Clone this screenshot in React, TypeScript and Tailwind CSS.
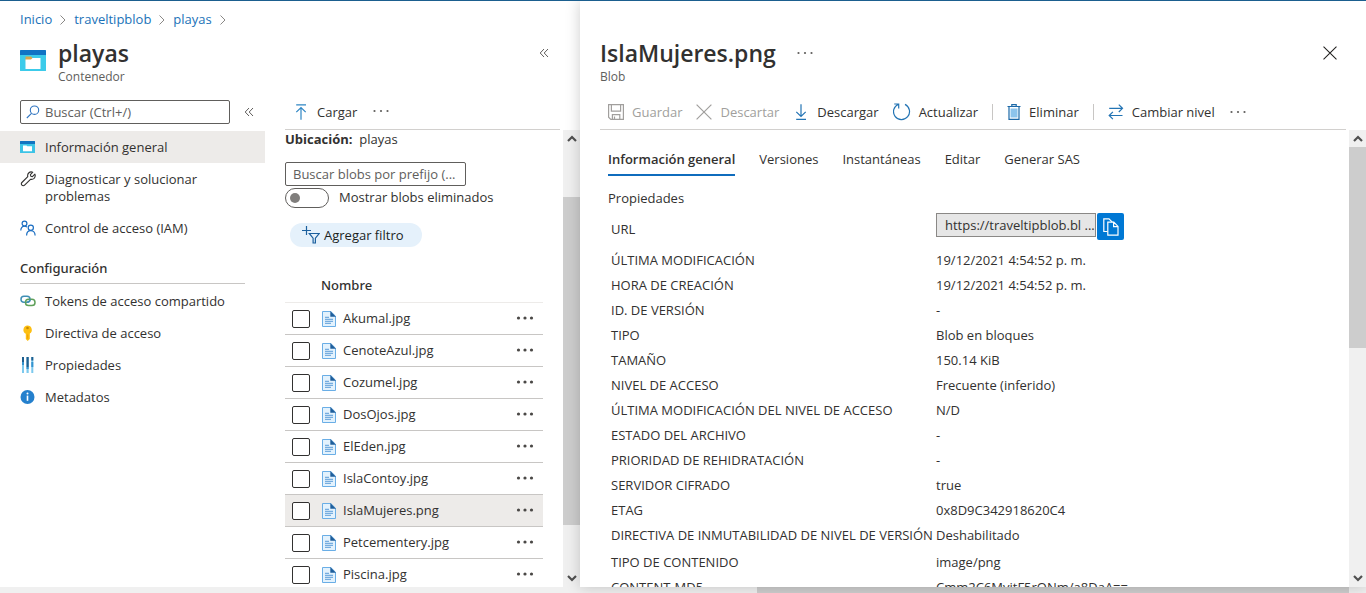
import React from "react";

const files = [
  "Akumal.jpg",
  "CenoteAzul.jpg",
  "Cozumel.jpg",
  "DosOjos.jpg",
  "ElEden.jpg",
  "IslaContoy.jpg",
  "IslaMujeres.png",
  "Petcementery.jpg",
  "Piscina.jpg",
];

const properties: [string, string][] = [
  ["ÚLTIMA MODIFICACIÓN", "19/12/2021 4:54:52 p. m."],
  ["HORA DE CREACIÓN", "19/12/2021 4:54:52 p. m."],
  ["ID. DE VERSIÓN", "-"],
  ["TIPO", "Blob en bloques"],
  ["TAMAÑO", "150.14 KiB"],
  ["NIVEL DE ACCESO", "Frecuente (inferido)"],
  ["ÚLTIMA MODIFICACIÓN DEL NIVEL DE ACCESO", "N/D"],
  ["ESTADO DEL ARCHIVO", "-"],
  ["PRIORIDAD DE REHIDRATACIÓN", "-"],
  ["SERVIDOR CIFRADO", "true"],
  ["ETAG", "0x8D9C342918620C4"],
  ["DIRECTIVA DE INMUTABILIDAD DE NIVEL DE VERSIÓN", "Deshabilitado"],
  ["TIPO DE CONTENIDO", "image/png"],
  ["CONTENT-MD5", "Cmm2C6MvitF5rONm/a8DaA=="],
];

type IconProps = { className?: string };

function ContainerIcon({ className }: IconProps) {
  return (
    <svg viewBox="0 0 26 21" className={className} aria-hidden="true">
      <rect width="26" height="21" rx="1" fill="#32bfe0" />
      <rect y="5" width="26" height="16" rx="1" fill="#3ccbea" />
      <path d="M0 1a1 1 0 0 1 1-1h24a1 1 0 0 1 1 1v4H0z" fill="#0f73c4" />
      <path d="M5.500 6.500h5.500l1.500 1.500v3h-7z" fill="#d9a54a" />
      <path d="M5.500 9.500h5.500l1.500-1.500h8v11h-15z" fill="#fff" />
    </svg>
  );
}

function ContainerSmallIcon() {
  return (
    <svg viewBox="0 0 15 12" className="h-3 w-[15px]" aria-hidden="true">
      <rect width="15" height="12" rx=".6" fill="#3cc3e6" />
      <path d="M0 .6A.6.6 0 0 1 .6 0h13.800a.6.6 0 0 1 .6.6V3H0z" fill="#1273c0" />
      <path d="M3 4.500h3.500l.8.8H12v5H3z" fill="#fff" />
    </svg>
  );
}

function WrenchIcon() {
  return (
    <svg viewBox="0 0 16 16" className="size-4" fill="none" stroke="#323130" strokeWidth="1.100" strokeLinejoin="round" aria-hidden="true">
      <path d="M12.800 1.200 10.400 3.600l.4 1.600 1.600.4 2.500-2.400c.6 1.600.3 3.100-.8 4.200-1 .9-2.300 1.200-3.600.9l-5.900 5.900a1.900 1.900 0 0 1-2.700 0 1.900 1.900 0 0 1 0-2.700l5.900-5.900c-.4-1.400 0-2.700.9-3.600 1.100-1.100 2.600-1.300 4.100-.8z" />
    </svg>
  );
}

function PeopleIcon() {
  return (
    <svg viewBox="0 0 16 16" className="size-4" fill="none" stroke="#1b6ec2" strokeWidth="1.200" aria-hidden="true">
      <circle cx="4.500" cy="3.600" r="2.400" />
      <path d="M.8 10.500c0-2.600 1.500-4.300 3.700-4.300 1 0 1.900.4 2.500 1" />
      <circle cx="10.800" cy="7.800" r="2.600" />
      <path d="M6.600 15.500c0-2.900 1.700-4.900 4.200-4.900s4.300 2 4.300 4.900" />
    </svg>
  );
}

function LinkIcon() {
  return (
    <svg viewBox="0 0 16 12" className="h-3 w-4" fill="none" strokeWidth="1.500" aria-hidden="true">
      <rect x="1" y="1.300" width="9" height="6" rx="3" stroke="#3f8fb5" />
      <rect x="5.500" y="4.300" width="9.500" height="6.200" rx="3.100" stroke="#5fa05a" />
      <path d="M7 7.300c2 0 3-1 3-3" stroke="#3f8fb5" />
    </svg>
  );
}

function KeyIcon() {
  return (
    <svg viewBox="0 0 16 16" className="size-4" aria-hidden="true">
      <path d="M7.500.5a4.400 4.400 0 0 1 2.300 8.100v5.500L7.700 16 5.800 14V8.800A4.400 4.400 0 0 1 7.500.5z" fill="#fdbf12" />
      <circle cx="7.500" cy="3" r="1.300" fill="#c98a00" />
      <path d="M7.300 9.500h.9v4.300h-.9z" fill="#f09a00" />
    </svg>
  );
}

function BarsIcon() {
  return (
    <svg viewBox="0 0 16 16" className="size-4" aria-hidden="true">
      <path d="M2 0h2v16H2zM6.500 0h2.200v16H6.500zM11.300 0h2v16h-2z" fill="#7cc9ee" />
      <path d="M2 0h2v5H2zM6.500 0h2.200v10H6.500zM11.300 0h2v3.500h-2z" fill="#1f5f8f" />
      <path d="M2 5h2v3H2zM6.500 10h2.200v2H6.500zM11.300 5h2v5h-2z" fill="#3593cf" />
    </svg>
  );
}

function InfoIcon() {
  return (
    <svg viewBox="0 0 16 16" className="size-4" aria-hidden="true">
      <circle cx="7.500" cy="8" r="7" fill="#2580cd" />
      <circle cx="7.500" cy="4.600" r="1" fill="#fff" />
      <path d="M6.700 6.600h1.600v5.200H6.700z" fill="#fff" />
    </svg>
  );
}

function SearchIcon() {
  return (
    <svg viewBox="0 0 14 14" className="size-[14px] shrink-0" fill="none" stroke="#2f74c0" strokeWidth="1.100" aria-hidden="true">
      <circle cx="8.500" cy="5.200" r="4.200" />
      <path d="M5.500 8.300.8 13" />
    </svg>
  );
}

function CollapseIcon() {
  return (
    <svg viewBox="0 0 10 10" className="size-[10px]" fill="none" stroke="#605e5c" strokeWidth="1" aria-hidden="true">
      <path d="M5 1 1.200 5 5 9M9 1 5.200 5 9 9" />
    </svg>
  );
}

function CrumbIcon() {
  return (
    <svg viewBox="0 0 8 12" className="h-3 w-2" fill="none" stroke="#8a8886" aria-hidden="true">
      <path d="m1.500 1.500 4.500 4.500-4.500 4.500" />
    </svg>
  );
}

function DotsIcon({ bold }: { bold?: boolean }) {
  return (
    <svg viewBox="0 0 18 4" className="h-1 w-[18px]" fill={bold ? "#4a4846" : "#605e5c"} aria-hidden="true">
      <circle cx="2.500" cy="2" r={bold ? 1.6 : 1.1} />
      <circle cx="9" cy="2" r={bold ? 1.6 : 1.1} />
      <circle cx="15.500" cy="2" r={bold ? 1.6 : 1.1} />
    </svg>
  );
}

function UploadIcon() {
  return (
    <svg viewBox="0 0 16 16" className="size-4" fill="none" stroke="#2f86c4" strokeWidth="1.200" aria-hidden="true">
      <path d="M3.200.8h9.800M8 15.800V3.500M3.300 8.200 8 3.500l4.700 4.700" />
    </svg>
  );
}

function DownloadIcon() {
  return (
    <svg viewBox="0 0 16 16" className="size-4" fill="none" stroke="#2374b4" strokeWidth="1.200" aria-hidden="true">
      <path d="M3.200 15.300h9.800M8 .2v12.300M3.300 7.800 8 12.500l4.700-4.700" />
    </svg>
  );
}

function SaveIcon() {
  return (
    <svg viewBox="0 0 16 16" className="size-4" fill="none" stroke="#a19f9d" strokeWidth="1.200" aria-hidden="true">
      <path d="M.6.6h14.800v14.800H2.800L.6 13.200zM3.400.6v6.600h9.200V.6M4.400 15.400v-4.800h7.400v4.800M6.500 12.500v2.900" />
    </svg>
  );
}

function CrossIcon({ className, stroke }: { className: string; stroke: string }) {
  return (
    <svg viewBox="0 0 16 16" className={className} fill="none" stroke={stroke} strokeWidth="1.200" aria-hidden="true">
      <path d="m.6.6 14.800 14.800M15.400.6.6 15.400" />
    </svg>
  );
}

function RefreshIcon() {
  return (
    <svg viewBox="0 0 18 18" className="size-[18px]" fill="none" stroke="#2374b4" strokeWidth="1.200" aria-hidden="true">
      <path d="M5.500 1.200A8 8 0 1 0 12 1.400M1.200 1h4.500v4.500" />
    </svg>
  );
}

function TrashIcon() {
  return (
    <svg viewBox="0 0 14 16" className="h-4 w-[14px]" fill="none" stroke="#1c69a8" strokeWidth="1.200" aria-hidden="true">
      <path d="M3.500 4.500h7v9h-7z" fill="#8cc4ec" stroke="none" />
      <path d="M.5 2.500h13M4.800 2.300V.7h4.400v1.600M2 2.800v12.500h10V2.800" />
    </svg>
  );
}

function SwapIcon() {
  return (
    <svg viewBox="0 0 16 16" className="size-4" fill="none" stroke="#2374b4" strokeWidth="1.200" aria-hidden="true">
      <path d="M1.200 4.300h13.300M10.800.6l3.700 3.700L10.800 8M14.500 11.500H1.200M4.900 7.800l-3.700 3.700 3.700 3.700" />
    </svg>
  );
}

function FilterIcon() {
  return (
    <svg viewBox="0 0 18 18" className="size-[18px]" fill="none" stroke="#1c609e" strokeWidth="1.200" aria-hidden="true">
      <path d="M0 4.500h9M4.500 0v9M7.300 7.500h10l-3.900 4.700V17h-2.300v-4.800z" />
    </svg>
  );
}

function FileIcon() {
  return (
    <svg viewBox="0 0 14 16" className="h-4 w-[14px]" aria-hidden="true">
      <path d="M.5.500h8.300L13.500 5.200v10.300H.5z" fill="#e3f2fd" stroke="#6aaee6" />
      <path d="M8.300 0 14 5.700H8.300z" fill="#1f5f9c" />
      <path d="M3 6.300h4M3 8.300h8M3 10.300h8M3 12.300h6" stroke="#5a9bd8" />
    </svg>
  );
}

function CopyIcon() {
  return (
    <svg viewBox="0 0 16 18" className="h-[18px] w-4" fill="none" stroke="#fff" strokeWidth="1.200" aria-hidden="true">
      <path d="M4.500 13.500H.8V.8H6l3.300 3.300" />
      <path d="M4.800 4.200h6l4.200 4.200v8.700H4.800zM10.600 4.400v4.200H15" />
    </svg>
  );
}

function ScrollArrow({ down }: { down?: boolean }) {
  return (
    <button type="button" aria-label={down ? "Bajar" : "Subir"} className="flex h-[17px] w-full shrink-0 items-center justify-center">
      <svg viewBox="0 0 10 7" className="h-[7px] w-[10px]" fill="none" stroke="#505050" strokeWidth="2.200" aria-hidden="true">
        <path d={down ? "m1 1 4 4 4-4" : "m1 6 4-4 4 4"} />
      </svg>
    </button>
  );
}

function MenuItem({ icon, children, selected }: { icon: React.ReactNode; children: React.ReactNode; selected?: boolean }) {
  return (
    <li>
      <a href="#" className={selected ? "flex gap-2 bg-[#edebe9] pb-[7px] pl-5 pr-10 pt-2" : "flex gap-2 pb-[7px] pl-5 pr-10 pt-2"}>
        <span className="flex h-4 w-[17px] shrink-0 items-center">{icon}</span>
        <span className="leading-[17px]">{children}</span>
      </a>
    </li>
  );
}

function Sidebar() {
  return (
    <nav className="w-[265px] shrink-0">
      <div className="flex items-center pl-5">
        <label className="flex h-6 w-[210px] shrink-0 items-center gap-1 rounded-xs border border-[#605e5c] pl-[5px]">
          <SearchIcon />
          <input aria-label="Buscar" placeholder="Buscar (Ctrl+/)" className="w-full min-w-0 pl-px pt-px outline-none placeholder:text-[#605e5c]" />
        </label>
        <button type="button" aria-label="Contraer menú" className="ml-[14px]">
          <CollapseIcon />
        </button>
      </div>
      <ul className="mt-[7px]">
        <MenuItem icon={<ContainerSmallIcon />} selected>Información general</MenuItem>
        <MenuItem icon={<WrenchIcon />}>Diagnosticar y solucionar problemas</MenuItem>
        <MenuItem icon={<PeopleIcon />}>Control de acceso (IAM)</MenuItem>
      </ul>
      <h2 className="mx-5 mt-[13px] border-b border-[#c8c6c4] pb-1 font-['Noto_Sans',sans-serif] font-medium leading-[22px]">Configuración</h2>
      <ul className="mt-px">
        <MenuItem icon={<LinkIcon />}>Tokens de acceso compartido</MenuItem>
        <MenuItem icon={<KeyIcon />}>Directiva de acceso</MenuItem>
        <MenuItem icon={<BarsIcon />}>Propiedades</MenuItem>
        <MenuItem icon={<InfoIcon />}>Metadatos</MenuItem>
      </ul>
    </nav>
  );
}

function BlobList() {
  return (
    <section className="flex min-h-0 min-w-0 flex-1 flex-col pl-5">
      <div className="mr-5 flex h-[30px] shrink-0 items-start border-b border-[#d2d0ce]">
        <button type="button" className="flex h-6 items-center gap-2 pl-2">
          <UploadIcon />
          <span className="pt-[2px]">Cargar</span>
        </button>
        <button type="button" aria-label="Más" className="ml-[15px] flex h-[22px] items-center">
          <DotsIcon />
        </button>
      </div>
      <div className="flex min-h-0 flex-1">
        <div className="min-w-0 flex-1 overflow-hidden">
          <p className="leading-[18px]"><b className="font-bold">Ubicación:</b>&nbsp; playas</p>
          <input
            aria-label="Buscar blobs por prefijo"
            placeholder="Buscar blobs por prefijo (..."
            className="mt-[14px] block h-6 w-[181px] rounded-xs border border-[#605e5c] px-[7px] outline-none placeholder:text-[#605e5c]"
          />
          <label className="mt-[2px] flex h-5 items-center gap-[10px]">
            <input
              type="checkbox"
              role="switch"
              className="h-5 w-11 shrink-0 appearance-none rounded-full border border-[#605e5c] p-1 before:block before:size-[10px] before:rounded-full before:bg-[#807e7c]"
            />
            Mostrar blobs eliminados
          </label>
          <button type="button" className="ml-[5px] mt-[15px] flex h-6 items-center gap-1 rounded-full bg-[#e5f1fb] pl-3 pr-[18px] text-[#201f1e]">
            <FilterIcon />
            <span className="pt-[2px]">Agregar filtro</span>
          </button>
          <table className="mt-[21px] w-[258px] border-collapse">
            <thead>
              <tr className="h-[34px] border-b border-[#edebe9]">
                <th className="w-9"><input type="checkbox" aria-label="Seleccionar todo" className="sr-only" /></th>
                <th className="p-0 pt-[2px] text-left font-['Noto_Sans',sans-serif] font-medium">Nombre</th>
                <th className="w-[27px]" />
              </tr>
            </thead>
            <tbody>
              {files.map((name) => (
                <tr key={name} className={name === "IslaMujeres.png" ? "h-8 border-b border-[#c8c6c4] bg-[#edebe9]" : "h-8 border-b border-[#c8c6c4]"}>
                  <td className="p-0 pt-[2px]">
                    <input type="checkbox" aria-label={name} className="ml-[7px] block size-[18px] appearance-none rounded-xs border border-[#323130] bg-white" />
                  </td>
                  <td className="p-0 pt-[2px]">
                    <a href="#" className="flex items-center gap-[7px] pl-px">
                      <FileIcon />
                      {name}
                    </a>
                  </td>
                  <td className="p-0 pt-[2px]">
                    <button type="button" aria-label={"Opciones de " + name} className="flex h-4 items-center pb-[2px]">
                      <DotsIcon bold />
                    </button>
                  </td>
                </tr>
              ))}
            </tbody>
          </table>
        </div>
        <div className="flex w-[17px] shrink-0 flex-col bg-[#f0f0f0]">
          <ScrollArrow />
          <div className="flex min-h-0 flex-1 flex-col">
            <div className="flex-50" />
            <div className="flex-328 bg-[#cdcdcd]" />
            <div className="flex-45" />
          </div>
          <ScrollArrow down />
        </div>
      </div>
    </section>
  );
}

function Tool({ icon, children, disabled }: { icon: React.ReactNode; children: string; disabled?: boolean }) {
  return (
    <button type="button" disabled={disabled} className={disabled ? "flex items-center gap-2 text-[#a19f9d]" : "flex items-center gap-2"}>
      {icon}
      <span className="pt-[2px]">{children}</span>
    </button>
  );
}

function DetailPanel() {
  return (
    <main className="relative flex min-h-0 min-w-0 flex-1 flex-col bg-white shadow-[0_0_14px_rgba(0,0,0,0.2)]">
      <header className="flex h-[99px] shrink-0 items-start justify-between pl-5 pr-[29px]">
        <div>
          <div className="mt-9 flex h-8 items-center gap-5">
            <h1 className="text-[23px] font-semibold">IslaMujeres.png</h1>
            <button type="button" aria-label="Más acciones"><DotsIcon /></button>
          </div>
          <p className="text-xs leading-4 text-[#605e5c]">Blob</p>
        </div>
        <button type="button" aria-label="Cerrar" className="mt-[45px]">
          <CrossIcon className="size-[14px]" stroke="#201f1e" />
        </button>
      </header>
      <div className="ml-5 mr-5 flex h-[30px] shrink-0 items-start whitespace-nowrap border-b border-[#d2d0ce] pl-2">
        <div className="flex h-6 items-center gap-[14px]">
          <Tool disabled icon={<SaveIcon />}>Guardar</Tool>
          <Tool disabled icon={<CrossIcon className="size-4" stroke="#a19f9d" />}>Descartar</Tool>
          <Tool icon={<DownloadIcon />}>Descargar</Tool>
          <Tool icon={<RefreshIcon />}>Actualizar</Tool>
          <span className="h-4 w-px bg-[#c8c6c4]" />
          <Tool icon={<TrashIcon />}>Eliminar</Tool>
          <span className="h-4 w-px bg-[#c8c6c4]" />
          <Tool icon={<SwapIcon />}>Cambiar nivel</Tool>
          <button type="button" aria-label="Más"><DotsIcon /></button>
        </div>
      </div>
      <div className="flex min-h-0 flex-1">
        <div className="min-w-0 flex-1 overflow-hidden pl-7">
          <div role="tablist" className="mt-[19px] flex h-[27px] gap-6">
            <button type="button" role="tab" aria-selected="true" className="border-b-2 border-[#0f6cbd] pb-[3px] font-semibold">Información general</button>
            <button type="button" role="tab" className="pb-[5px]">Versiones</button>
            <button type="button" role="tab" className="pb-[5px]">Instantáneas</button>
            <button type="button" role="tab" className="pb-[5px]">Editar</button>
            <button type="button" role="tab" className="pb-[5px]">Generar SAS</button>
          </div>
          <h2 className="mt-[13px] leading-[18px]">Propiedades</h2>
          <table className="ml-[3px] mt-[6px] border-collapse">
            <tbody>
              <tr className="h-[34px] align-top">
                <th className="w-[325px] p-0 text-left font-normal"><label htmlFor="url" className="block pt-[7px] leading-[18px]">URL</label></th>
                <td className="p-0">
                  <div className="flex items-start gap-px">
                    <input id="url" readOnly value="https://traveltipblob.bl ..." className="h-6 w-40 border border-[#8a8886] bg-[#e6e6e6] pb-px pl-2 outline-none" />
                    <button type="button" aria-label="Copiar" className="flex size-[27px] items-center justify-center rounded-xs bg-[#0078d4]">
                      <CopyIcon />
                    </button>
                  </div>
                </td>
              </tr>
              {properties.map(([name, value]) => (
                <tr key={name} className={name === "TIPO DE CONTENIDO" ? "h-[27px] align-bottom" : "h-[25px] align-bottom"}>
                  <th className="whitespace-nowrap p-0 pb-[3px] text-left font-normal leading-[18px]">{name}</th>
                  <td className="whitespace-nowrap p-0 pb-[3px] leading-[18px]">{value}</td>
                </tr>
              ))}
            </tbody>
          </table>
        </div>
        <div className="flex w-[17px] shrink-0 flex-col bg-[#f0f0f0]">
          <ScrollArrow />
          <div className="flex min-h-0 flex-1 flex-col">
            <div className="flex-201 bg-[#cdcdcd]" />
            <div className="flex-222" />
          </div>
          <ScrollArrow down />
        </div>
      </div>
    </main>
  );
}

export default function App() {
  return (
    <div className="flex h-screen flex-col overflow-hidden border-t border-[#1b5f8f] bg-white font-['Open_Sans','Noto_Sans',sans-serif] text-[13px] text-[#323130]">
      <div className="flex min-h-0 flex-1">
        <div className="flex min-h-0 w-[580px] shrink-0 flex-col">
          <nav aria-label="Ruta" className="mt-[9px] flex h-5 items-center gap-[7px] pl-5 text-[#1b72b8]">
            <a href="#">Inicio</a>
            <CrumbIcon />
            <a href="#">traveltipblob</a>
            <CrumbIcon />
            <a href="#">playas</a>
            <CrumbIcon />
          </nav>
          <header className="flex h-[70px] shrink-0 items-start pl-5 pt-[7px]">
            <ContainerIcon className="mt-[13px] h-[21px] w-[26px]" />
            <div className="ml-3 flex-1">
              <h1 className="text-[23px] font-semibold leading-8">playas</h1>
              <p className="text-xs leading-4 text-[#605e5c]">Contenedor</p>
            </div>
            <button type="button" aria-label="Contraer" className="mr-[31px] mt-[11px]">
              <CollapseIcon />
            </button>
          </header>
          <div className="flex min-h-0 flex-1">
            <Sidebar />
            <BlobList />
          </div>
        </div>
        <DetailPanel />
      </div>
      <div className="flex h-[6px] shrink-0 bg-[#f0f0f0]">
        <div className="flex-757" />
        <div className="flex-592 bg-[#cdcdcd]" />
        <div className="w-[17px]" />
      </div>
    </div>
  );
}
